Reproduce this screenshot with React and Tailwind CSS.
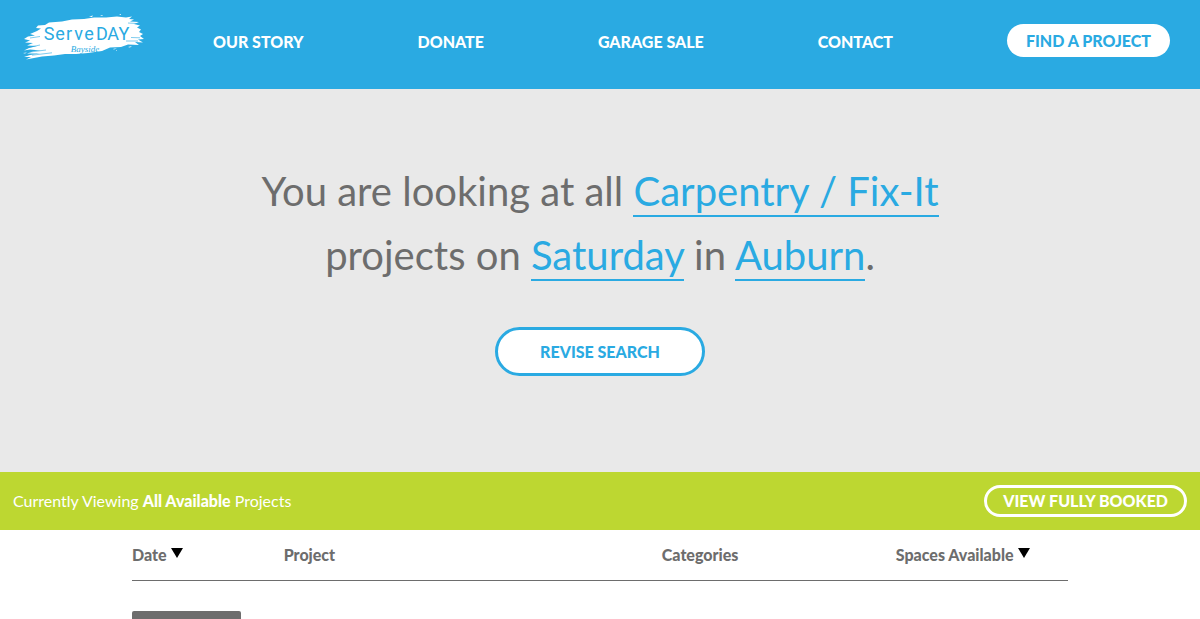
const linkClass = 'border-b-2 border-[#2aaae2] text-[#2aaae2]';

function Logo() {
  return (
    <svg viewBox="0 0 124 50" className="h-[50px] w-[124px]" role="img" aria-label="Serve Day Bayside">
      <g fill="#fff">
        <path d="M15 19 L19 16.5 L14 16 L16 13.5 L23 13 L27 10.5 L40 9.5 L50 7.5 L62 7 L72 5.5 L84 5.5 L95 4.5 L104 5.5 L110 4.5 L107 7 L112 7.5 L108 9.5 L117 10 L112 12 L118 13.5 L115 15.5 L119 17.5 L117 20 L121 22 L118 24 L122 27 L116 27.5 L121 30.5 L113 30 L117 33 L106 32.5 L99 35 L88 35.5 L80 39 L66 41 L54 42 L43 42 L32 43.5 L20 44.5 L4 47.5 L9 45 L2 45 L8 43 L18 41.5 L5 41.5 L12 39 L19 38.5 L8 37.5 L2 38.5 L7 36 L15 34 L5 33.5 L11 31 L3 30.5 L8 28.5 L2 27 L6 24.5 L13 23.5 L8 22 Z" />
        <path d="M67 4.5l4-1-1 1.5zM78 3.5l3-.5-1 1zM97 2.5l2-.5v1zM91 37l4-1-3 1.5zM106 35l4-1-2 1.5zM94 39l1-1v1zM1 41l4-.6-2 1z" />
      </g>
      <g fill="none" stroke="#2aaae2" strokeWidth=".6">
        <path d="M4 36 L18 33M6 40.3 L24 38M10 43.2 L30 40.8M8 26 L18 24.5M106 11 L115 11.5M109 25.5 L118 25.8M104 29 L116 29" />
      </g>
      <g fill="#2aaae2" fontFamily="Roboto, sans-serif" fontSize="18" fontWeight="400" textAnchor="middle">
        <text y="28" x="27 38 47 56.5 67">Serve</text>
        <text y="28" x="80 91 102">DAY</text>
      </g>
      <text x="63" y="40" textAnchor="middle" fill="#2aaae2" fontFamily="'Liberation Serif', serif" fontStyle="italic" fontWeight="400" fontSize="9">Bayside</text>
    </svg>
  );
}

function SortArrow() {
  return (
    <svg viewBox="0 0 12 10" className="mb-1 h-2.5 w-3" aria-hidden="true">
      <path d="M0 0H12L6 10Z" fill="#000" />
    </svg>
  );
}

export default function App() {
  return (
    <div className="font-['Lato',sans-serif] text-[#6d6d6d]">
      <header className="flex h-[89px] items-start bg-[#2aaae2] pr-[30px] pl-[22px] text-base font-black text-white">
        <a href="#home" className="mt-3 w-[191px] shrink-0"><Logo /></a>
        <nav className="mt-[30px] mr-[114px] flex flex-1 justify-between leading-6">
          <a href="#story">OUR STORY</a>
          <a href="#donate">DONATE</a>
          <a href="#sale">GARAGE SALE</a>
          <a href="#contact">CONTACT</a>
        </nav>
        <a href="#find" className="mt-6 rounded-full bg-white px-[19px] py-1 leading-[25px] text-[#2aaae2]">FIND A PROJECT</a>
      </header>

      <main>
        <section className="flex flex-col items-center bg-[#e9e9e9] px-4 pt-[70px] pb-24">
          <h1 className="max-w-[720px] text-center text-[40px] leading-[64px]">
            You are looking at all <a href="#category" className={linkClass}>Carpentry / Fix-It</a> projects on{' '}
            <a href="#day" className={linkClass}>Saturday</a> in <a href="#city" className={linkClass}>Auburn</a>.
          </h1>
          <button type="button" className="mt-10 rounded-full border-[3px] border-[#2aaae2] bg-white px-[42px] py-[9px] text-base leading-[25px] font-black text-[#2aaae2]">
            REVISE SEARCH
          </button>
        </section>

        <section className="flex items-center justify-between bg-[#bdd731] px-[13px] py-[13px] text-base text-white">
          <p>Currently Viewing <strong className="font-black">All Available</strong> Projects</p>
          <button type="button" className="rounded-full border-[3px] border-white px-4 leading-[26px] font-black">VIEW FULLY BOOKED</button>
        </section>

        <section className="mx-[11%]">
          <table className="w-full table-fixed border-b border-[#6d6d6d] text-left text-base">
            <thead>
              <tr className="h-[50px] align-top">
                <th className="w-[16.2%] pt-[13px] font-black"><button type="button" className="flex items-center gap-1">Date <SortArrow /></button></th>
                <th className="w-[40.4%] pt-[13px] font-black">Project</th>
                <th className="w-[25%] pt-[13px] font-black">Categories</th>
                <th className="pt-[13px] font-black"><button type="button" className="flex items-center gap-1 whitespace-nowrap">Spaces Available <SortArrow /></button></th>
              </tr>
            </thead>
          </table>
          <div className="mt-[30px] h-2 w-[109px] rounded-t-xs bg-[#6d6d6d]" />
        </section>
      </main>
    </div>
  );
}
